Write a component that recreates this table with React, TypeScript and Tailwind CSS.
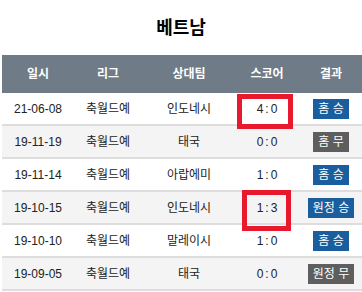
import React from "react";

type Row = { date: string; league: string; opp: string; score: string; result: string; win: boolean };

const rows: Row[] = [
  { date: "21-06-08", league: "축월드예", opp: "인도네시", score: "4:0", result: "홈 승", win: true },
  { date: "19-11-19", league: "축월드예", opp: "태국", score: "0:0", result: "홈 무", win: false },
  { date: "19-11-14", league: "축월드예", opp: "아랍에미", score: "1:0", result: "홈 승", win: true },
  { date: "19-10-15", league: "축월드예", opp: "인도네시", score: "1:3", result: "원정 승", win: true },
  { date: "19-10-10", league: "축월드예", opp: "말레이시", score: "1:0", result: "홈 승", win: true },
  { date: "19-09-05", league: "축월드예", opp: "태국", score: "0:0", result: "원정 무", win: false },
];

const font = { fontFamily: '"Liberation Sans", "Noto Sans CJK KR", sans-serif' };

export default function App() {
  return (
    <div className="w-[362px] h-[292px] overflow-hidden bg-white relative" style={font}>
      <div className="h-[55px] flex items-center justify-center text-[18px] font-bold text-black pt-[2px]">베트남</div>
      <div className="ml-[2px] w-[362px]">
        <div className="grid grid-cols-[72px_68px_94px_62px_66px] h-[38px] bg-[#6f7b86] text-white font-bold text-[12px] items-center text-center">
          <div>일시</div>
          <div>리그</div>
          <div>상대팀</div>
          <div>스코어</div>
          <div>결과</div>
        </div>
        {rows.map((r, i) => (
          <div
            key={i}
            className={`grid grid-cols-[72px_68px_94px_62px_66px] h-[33px] border-b-2 border-[#dddddd] items-center text-center text-[12px] text-[#222222] ${i % 2 === 1 ? "bg-[#f4f4f4]" : "bg-white"}`}
          >
            <div>{r.date}</div>
            <div>{r.league}</div>
            <div>{r.opp}</div>
            <div className="tracking-[2px] pl-[2px]">{r.score}</div>
            <div className="flex justify-center">
              <span
                className={`h-[20px] px-[5px] leading-[20px] text-white text-[12px] whitespace-nowrap ${r.win ? "bg-[#1b5e9e]" : "bg-[#5e5e5e]"}`}
              >
                {r.result}
              </span>
            </div>
          </div>
        ))}
      </div>
      <div className="absolute left-[237px] top-[94px] w-[56px] h-[35px] border-[5px] border-[#e8192c]" />
      <div className="absolute left-[242px] top-[190px] w-[49px] h-[41px] border-[5px] border-[#e8192c]" />
    </div>
  );
}
